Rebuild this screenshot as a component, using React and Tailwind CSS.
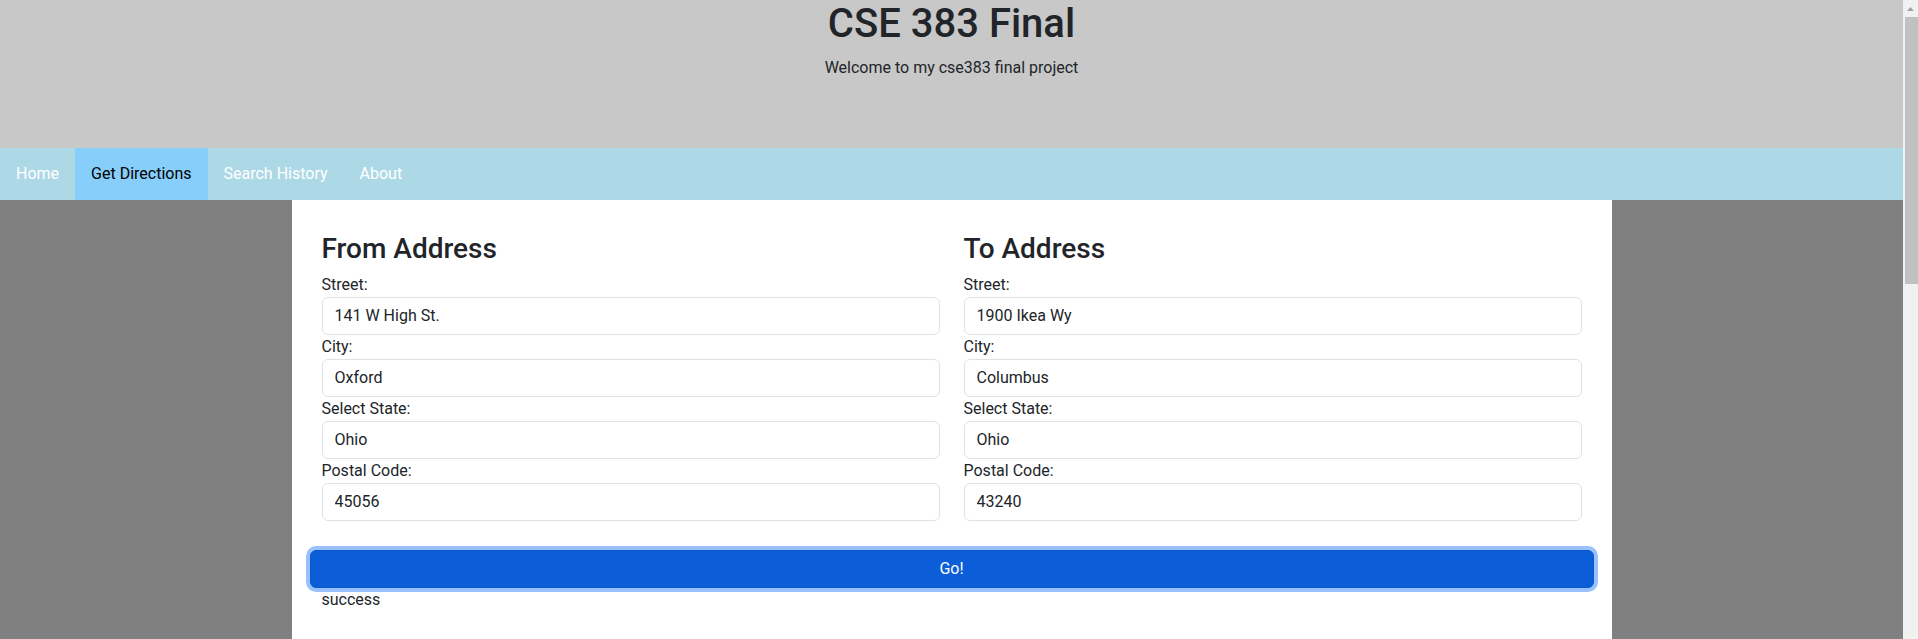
import { useState } from 'react'

const fields = [
  { label: 'Street:', key: 'street' },
  { label: 'City:', key: 'city' },
  { label: 'Select State:', key: 'state' },
  { label: 'Postal Code:', key: 'zip' },
];

const AddressForm = ({ title, value, onChange }) => {
  return (
    <div className="flex flex-col">
      <h3 className="text-[28px] leading-[1.2] font-medium mb-[7px]">{title}</h3>
      {fields.map((f) => (
        <div key={f.key} className="flex flex-col">
          <label className="text-[16px] leading-[24px]">{f.label}</label>
          <input
            type="text"
            value={value[f.key]}
            onChange={(e) => onChange({ ...value, [f.key]: e.target.value })}
            className="w-full h-[38px] px-[12px] py-[6px] text-[16px] leading-[24px] text-[#212529] bg-white border border-[#dee2e6] rounded-[6px] focus:outline-none"
          />
        </div>
      ))}
    </div>
  );
}

// fake browser scrollbar so the page is laid out in 1903px like the original
const Scrollbar = () => (
  <div className="w-[15px] h-[639px] sticky top-0 bg-[#f1f1f1] flex flex-col items-center">
    <div className="h-[17px] w-full flex items-center justify-center">
      <svg width="7" height="4" viewBox="0 0 7 4">
        <path d="M3.5 0 L7 4 L0 4 Z" fill="#a3a3a3" />
      </svg>
    </div>
    <div className="w-[13px] h-[267px] ml-[2px] bg-[#c1c1c1]"></div>
  </div>
);

const App = () => {
  const [from, setFrom] = useState({ street: '141 W High St.', city: 'Oxford', state: 'Ohio', zip: '45056' });
  const [to, setTo] = useState({ street: '1900 Ikea Wy', city: 'Columbus', state: 'Ohio', zip: '43240' });
  const [status, setStatus] = useState('success');

  const tabs = ['Home', 'Get Directions', 'Search History', 'About'];

  return (
    <div className="flex items-start bg-[#f1f1f1] font-['Roboto',sans-serif]">
      <div className="flex-1 min-h-[1450px] bg-[#808080] text-[#212529]">
        {/* header */}
        <div className="h-[148px] bg-[#c8c8c8] flex flex-col items-center">
          <h1 className="text-[40px] leading-[1.2] font-medium mb-[8px]">CSE 383 Final</h1>
          <p className="text-[16px] leading-[24px]">Welcome to my cse383 final project</p>
        </div>

        {/* nav */}
        <nav className="h-[52px] bg-[#add8e6] flex">
          {tabs.map((t) => (
            <a
              key={t}
              href="#"
              className={
                t === 'Get Directions'
                  ? 'flex items-center px-[16px] text-[16px] bg-[#87cefa] text-black'
                  : 'flex items-center px-[16px] text-[16px] text-white'
              }
            >
              {t}
            </a>
          ))}
        </nav>

        {/* card */}
        <div className="w-[1320px] mx-auto bg-white min-h-[1250px] px-[30px] pt-[32px]">
          <div className="grid grid-cols-2 gap-x-[24px]">
            <AddressForm title="From Address" value={from} onChange={setFrom} />
            <AddressForm title="To Address" value={to} onChange={setTo} />
          </div>
          <div className="-mx-[12px] mt-[29px]">
            <button
              type="button"
              onClick={() => setStatus('success')}
              className="w-full h-[38px] text-[16px] text-white bg-[#0b5ed7] border border-[#0a58ca] rounded-[6px] ring-4 ring-[#98c1fe]"
            >
              Go!
            </button>
          </div>
          <div className="text-[16px] leading-[24px]">{status}</div>
        </div>
      </div>
      <Scrollbar />
    </div>
  );
}

export default App;
